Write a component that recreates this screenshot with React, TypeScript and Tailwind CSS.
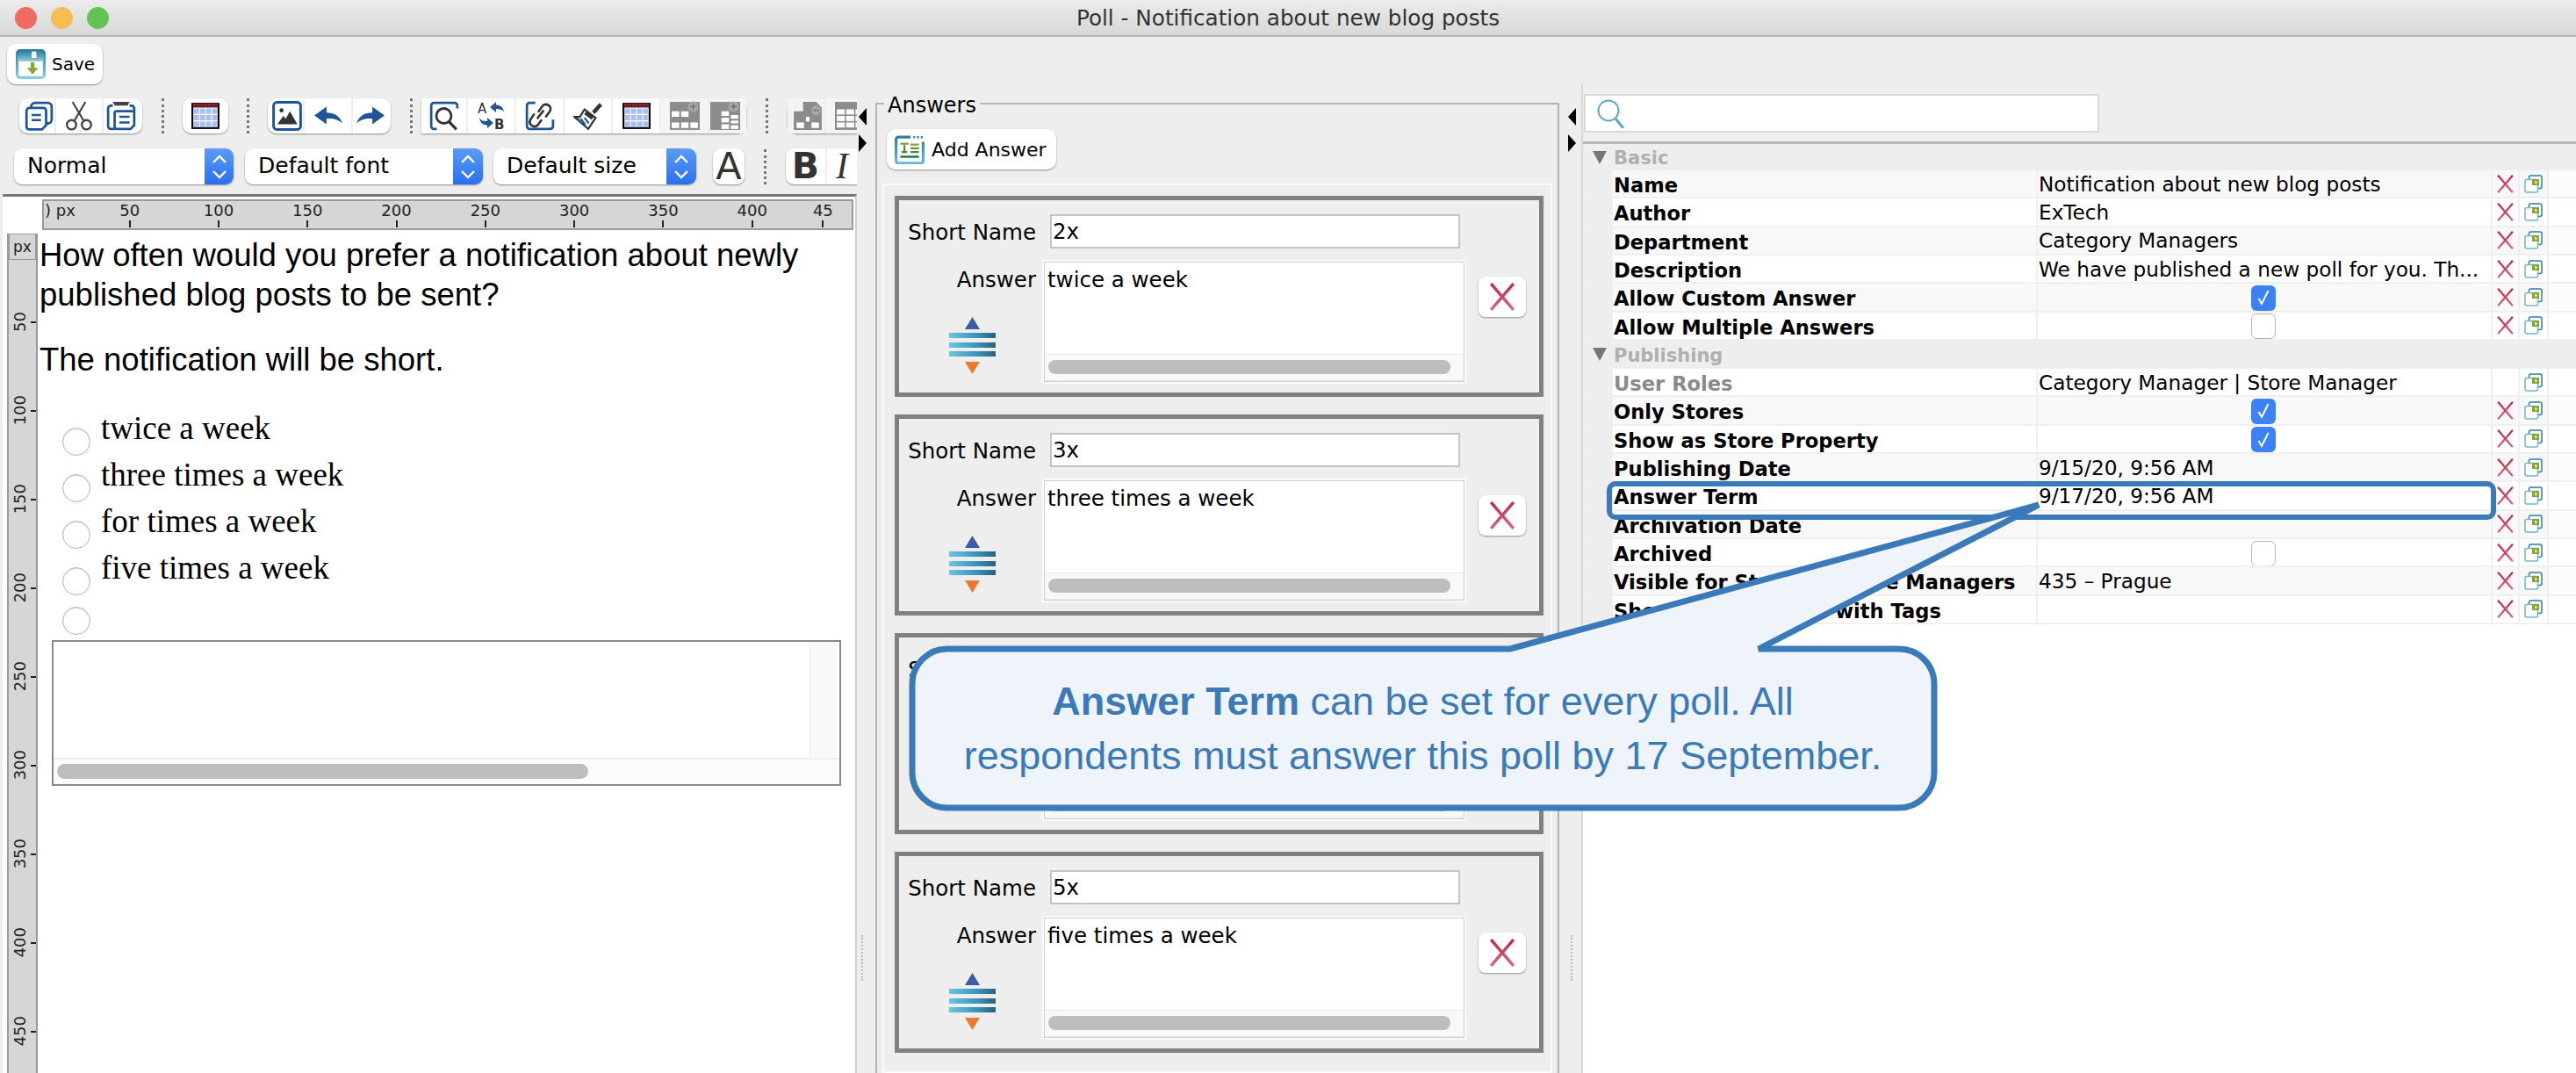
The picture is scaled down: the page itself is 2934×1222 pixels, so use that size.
import type { ReactNode } from "react";

const BLUE = "#1f5596";
const CALLOUT = "#3a7ab8";

type Row = { name: string; value?: string; check?: boolean; muted?: boolean; noDelete?: boolean };

const BASIC: Row[] = [
  { name: "Name", value: "Notification about new blog posts" },
  { name: "Author", value: "ExTech" },
  { name: "Department", value: "Category Managers" },
  { name: "Description", value: "We have published a new poll for you. Th..." },
  { name: "Allow Custom Answer", check: true },
  { name: "Allow Multiple Answers", check: false },
];

const PUBLISHING: Row[] = [
  { name: "User Roles", value: "Category Manager | Store Manager", muted: true, noDelete: true },
  { name: "Only Stores", check: true },
  { name: "Show as Store Property", check: true },
  { name: "Publishing Date", value: "9/15/20, 9:56 AM" },
  { name: "Answer Term", value: "9/17/20, 9:56 AM" },
  { name: "Archivation Date" },
  { name: "Archived", check: false },
  { name: "Visible for Stores & Store Managers", value: "435 – Prague" },
  { name: "Show for All Stores with Tags" },
];

const CARDS = [
  { short: "2x", answer: "twice a week" },
  { short: "3x", answer: "three times a week" },
  { short: "4x", answer: "for times a week" },
  { short: "5x", answer: "five times a week" },
];

const RADIOS = ["twice a week", "three times a week", "for times a week", "five times a week"];

/* ---------- icons ---------- */

function Icon({ children, size = 34 }: { children: ReactNode; size?: number }) {
  return (
    <svg width={size} height={size} viewBox="0 0 32 32" fill="none">
      {children}
    </svg>
  );
}

function SaveIcon() {
  return (
    <svg width="34" height="34" viewBox="0 0 32 32" fill="none">
      <defs>
        <linearGradient id="saveFrame" x1="0" y1="0" x2="0" y2="1">
          <stop offset="0" stopColor="#2f7ea0" />
          <stop offset="1" stopColor="#8ccbdc" />
        </linearGradient>
      </defs>
      <rect x="1.5" y="1.5" width="29" height="29" rx="3" fill="#fff" stroke="url(#saveFrame)" strokeWidth="3" />
      <rect x="2" y="2" width="28" height="11" fill="url(#saveFrame)" />
      <rect x="17" y="2.5" width="5" height="7" fill="#fff" />
      <path d="M18 15v6h4l-6 7-6-7h4v-6z" transform="translate(2 -1)" fill="#8aa42f" />
    </svg>
  );
}

function CopyIcon() {
  return (
    <Icon>
      <rect x="8" y="2" width="22" height="22" rx="4" stroke={BLUE} strokeWidth="2.6" />
      <path d="M6 7.5h15a3 3 0 0 1 3 3V26l-4.5 4.5H6a3 3 0 0 1-3-3v-17a3 3 0 0 1 3-3z" fill="#fff" stroke={BLUE} strokeWidth="2.6" />
      <path d="M8.5 15h10M8.5 20.5h10" stroke={BLUE} strokeWidth="2.4" />
    </Icon>
  );
}

function CutIcon() {
  return (
    <Icon>
      <path d="M9 1l12.5 21M23 1L10.5 22" stroke="#444" strokeWidth="2" />
      <circle cx="8" cy="25.5" r="5" stroke="#444" strokeWidth="2.2" />
      <circle cx="24" cy="25.5" r="5" stroke="#444" strokeWidth="2.2" />
    </Icon>
  );
}

function PasteIcon() {
  return (
    <Icon>
      <path d="M7 5H5a3 3 0 0 0-3 3v19a3 3 0 0 0 3 3h4M25 5h2a3 3 0 0 1 3 3v2" stroke={BLUE} strokeWidth="2.6" />
      <path d="M7 1h18l-2 4H9z" fill="#444" />
      <path d="M11 11h19v15l-4 4H11a2 2 0 0 1-2-2V13a2 2 0 0 1 2-2z" fill="#fff" stroke={BLUE} strokeWidth="2.6" />
      <path d="M14 17h11M14 23h11" stroke={BLUE} strokeWidth="2.4" />
    </Icon>
  );
}

function TableIcon() {
  return (
    <Icon>
      <rect x="1" y="2" width="30" height="28" fill="#000" />
      <rect x="2.5" y="3" width="27" height="4" fill="#6a1a2a" />
      <path d="M3 4h26" stroke="#d23" strokeWidth="1.4" strokeDasharray="2 2" />
      <rect x="3" y="7" width="26" height="21" fill="#fff" />
      {[8, 15, 22].map((y) =>
        [3.5, 10, 16.5, 23].map((x) => <rect key={`${x}-${y}`} x={x} y={y} width="5.6" height="5.8" fill="#a9bff0" />),
      )}
    </Icon>
  );
}

function ImageIcon() {
  return (
    <Icon>
      <rect x="1.5" y="1.5" width="29" height="29" rx="3.5" fill="#fff" stroke={BLUE} strokeWidth="2.8" />
      <circle cx="10" cy="10" r="2.2" fill="#333" />
      <path d="M5.5 25l6.5-9 2.5 3 4.5-8 8 14z" fill="#333" />
    </Icon>
  );
}

function UndoIcon({ flip }: { flip?: boolean }) {
  return (
    <Icon>
      <g transform={flip ? "matrix(-1 0 0 1 32 0)" : undefined}>
        <path d="M1 15.5L14 6v6.5c8 0 14 3 17 11.5-5-4.500-10-5.500-17-5v6z" fill={BLUE} />
      </g>
    </Icon>
  );
}

function FindIcon() {
  return (
    <Icon>
      <path d="M8 30H5a3 3 0 0 1-3-3V5a3 3 0 0 1 3-3h22a3 3 0 0 1 3 3v3" stroke={BLUE} strokeWidth="2.6" />
      <circle cx="15.5" cy="16" r="8" fill="#fff" stroke="#333" strokeWidth="2.6" />
      <path d="M21 22l8 8.500" stroke="#333" strokeWidth="3" />
    </Icon>
  );
}

function ReplaceIcon() {
  return (
    <svg width="34" height="34" viewBox="0 0 34 34" fill="none">
      <text x="1" y="14" fontSize="15" fontFamily="DejaVu Sans" fill="#333">A</text>
      <text x="20" y="32" fontSize="15" fontFamily="DejaVu Sans" fontWeight="bold" fill="#333">B</text>
      <path d="M15 7l7-6v3.500c4 0 8 2 9 8-2-3-5-3.500-9-3.500V13z" fill={BLUE} />
      <path d="M19 25l-7 6v-3.500c-4 0-8-2-9-8 2 3 5 3.500 9 3.500V19z" fill={BLUE} />
    </svg>
  );
}

function LinkIcon() {
  return (
    <Icon>
      <path d="M11 2H5a3 3 0 0 0-3 3v22a3 3 0 0 0 3 3h22a3 3 0 0 0 3-3v-7" stroke={BLUE} strokeWidth="2.6" />
      <path d="M14 12l5-7a5 5 0 0 1 8 5.500l-5 7M18 20l-4.500 6a5 5 0 0 1-8-5.500l4.500-7" stroke="#333" strokeWidth="2.4" />
      <path d="M13 19l7-9" stroke="#333" strokeWidth="2.4" />
    </Icon>
  );
}

function BroomIcon() {
  return (
    <Icon>
      <path d="M20 11l8-9 3 3-8 9z" fill="#333" />
      <path d="M12 9l12 9-8 12L1 17l6 0z" fill="#fff" stroke="#333" strokeWidth="2" />
      <path d="M14 11l8 6-2.500 3-8-6z" fill="#333" />
      <path d="M8 19l5 7M12 18l4.500 6M4.500 18.500L9 24" stroke={BLUE} strokeWidth="2" />
    </Icon>
  );
}

function GreyTable({ variant }: { variant: number }) {
  const fill = "#8c8c8c";
  return (
    <Icon>
      <rect x="0" y="1" width="32" height="30" fill={fill} />
      {variant === 0 && (
        <>
          <rect x="2" y="11" width="8" height="6" fill="#fff" />
          <rect x="12" y="11" width="8" height="6" fill="#fff" />
          <rect x="2" y="23" width="8" height="6" fill="#fff" />
          <rect x="12" y="23" width="8" height="6" fill="#fff" />
          <rect x="22" y="23" width="8" height="6" fill="#fff" />
        </>
      )}
      {variant === 1 && (
        <>
          <rect x="12" y="11" width="8" height="5" fill="#fff" />
          <rect x="22" y="15" width="8" height="4" fill="#fff" />
          <rect x="12" y="18" width="8" height="5" fill="#fff" />
          <rect x="22" y="21" width="8" height="3" fill="#fff" />
          <rect x="12" y="25" width="8" height="5" fill="#fff" />
          <rect x="22" y="26" width="8" height="4" fill="#fff" />
        </>
      )}
      <circle cx="25" cy="6" r="5.500" fill="#aaa" />
      <path d="M21.500 6h7M25 2.500v7" stroke="#777" strokeWidth="1.600" />
    </Icon>
  );
}

function MergeIcon() {
  return (
    <Icon>
      <path d="M11 1h14l6 6v24H1V11h10z" fill="#8c8c8c" />
      <rect x="4" y="23" width="8" height="6" fill="#fff" />
      <rect x="20" y="23" width="8" height="6" fill="#fff" />
      <rect x="14" y="17" width="4" height="5" fill="#fff" />
      <circle cx="25" cy="10" r="5" fill="#aaa" />
      <path d="M22 10h6" stroke="#777" strokeWidth="1.600" />
    </Icon>
  );
}

function GridIcon() {
  return (
    <Icon>
      <rect x="0" y="1" width="32" height="30" fill="#8c8c8c" />
      {[9, 16, 23].map((y) =>
        [2, 12, 22].map((x) => <rect key={`${x}-${y}`} x={x} y={y} width="8.500" height="5.500" fill="#fff" />),
      )}
    </Icon>
  );
}

function AddAnswerIcon() {
  return (
    <svg width="34" height="34" viewBox="0 0 32 32" fill="none">
      <defs>
        <linearGradient id="addFrame" x1="0" y1="0" x2="0" y2="1">
          <stop offset="0" stopColor="#2f7ea0" />
          <stop offset="1" stopColor="#66b7dc" />
        </linearGradient>
        <linearGradient id="addLines" x1="0" y1="0" x2="0" y2="1">
          <stop offset="0" stopColor="#8aa42f" />
          <stop offset="1" stopColor="#1f7a45" />
        </linearGradient>
      </defs>
      <path d="M17 3H4a2.500 2.500 0 0 0-2.500 2.500v23A2.500 2.500 0 0 0 4 31h24a2.500 2.500 0 0 0 2.500-2.500V8" stroke="url(#addFrame)" strokeWidth="3" />
      <path d="M20 3h2M24 3h2M28 3h2" stroke="#2f7ea0" strokeWidth="2.400" />
      <path d="M6 10h9M10.500 10v9M7.500 19h6M17 11h9M17 15h9M17 19h9M6 24h20" stroke="url(#addLines)" strokeWidth="2.200" />
    </svg>
  );
}

function XIcon({ size = 32, id }: { size?: number; id: string }) {
  return (
    <svg width={size} height={size} viewBox="0 0 30 30" fill="none">
      <defs>
        <linearGradient id={id} x1="0" y1="0" x2="0" y2="1">
          <stop offset="0" stopColor="#c2293f" />
          <stop offset="1" stopColor="#d4688a" />
        </linearGradient>
      </defs>
      <path d="M3 1l24 28M27 1L3 29" stroke={`url(#${id})`} strokeWidth="3.200" />
    </svg>
  );
}

function MoveIcon() {
  return (
    <svg width="53" height="65" viewBox="0 0 53 65">
      <defs>
        <linearGradient id="moveBar" x1="0" y1="0" x2="1" y2="0">
          <stop offset="0" stopColor="#6cc4e2" />
          <stop offset="0.6" stopColor="#3a93b8" />
          <stop offset="1" stopColor="#2e5f78" />
        </linearGradient>
      </defs>
      <path d="M26.500 0L35 14H18z" fill="#3a5ba8" />
      <rect y="18" width="53" height="6" fill="url(#moveBar)" />
      <rect y="29" width="53" height="6" fill="url(#moveBar)" />
      <rect y="39" width="53" height="6" fill="url(#moveBar)" />
      <path d="M26.500 65L18 51h17z" fill="#ec7a2c" />
    </svg>
  );
}

function SmallCopy() {
  return (
    <svg width="21" height="21" viewBox="0 0 21 21" fill="none">
      <rect x="5.500" y="1" width="14.500" height="14.500" rx="2" fill="#fff" stroke="#2f7ea0" strokeWidth="1.500" />
      <rect x="1" y="5.500" width="14.500" height="14.500" rx="2" fill="#fff" stroke="#6fb6cf" strokeWidth="1.500" />
      <path d="M9 5h8v7H9z" fill="#8aa42f" />
      <path d="M12 7l3 1-2 3z" fill="#fff" />
    </svg>
  );
}

function Chevrons() {
  return (
    <svg width="20" height="32" viewBox="0 0 20 32" fill="none">
      <path d="M3 11l7-7 7 7M3 21l7 7 7-7" stroke="#fff" strokeWidth="2.400" />
    </svg>
  );
}

/* ---------- toolbar ---------- */

function Seg({ w, children }: { w: string; children: ReactNode }) {
  return <div className={`flex h-full shrink-0 items-center justify-center border-r-2 border-[#eeeeee] last:border-r-0 ${w}`}>{children}</div>;
}

function Group({ children, className = "rounded-[10px]" }: { children: ReactNode; className?: string }) {
  return <div className={`flex h-[40px] shrink-0 bg-white shadow-[0_1px_2px_rgba(0,0,0,0.4)] ${className}`}>{children}</div>;
}

function Sep({ className }: { className: string }) {
  return <div className={`h-[40px] w-0 shrink-0 border-l-[3px] border-dotted border-[#777] ${className}`} />;
}

function Combo({ label, w, blue }: { label: string; w: string; blue: string }) {
  return (
    <div className={`flex h-[41px] shrink-0 overflow-hidden rounded-[9px] bg-white shadow-[0_1px_2px_rgba(0,0,0,0.4)] ${w}`}>
      <div className="flex-1 pl-[15px] text-[25px] leading-[40px] text-black">{label}</div>
      <div className={`flex items-center justify-center bg-gradient-to-b from-[#5b9bf6] to-[#2a6ef2] ${blue}`}>
        <Chevrons />
      </div>
    </div>
  );
}

/* ---------- rulers ---------- */

function HorizontalRuler() {
  const marks = [50, 100, 150, 200, 250, 300, 350, 400];
  return (
    <div className="flex h-[35px] w-[924px] shrink-0 overflow-hidden border-2 border-[#9a9a9a] bg-[#d6d6d6] text-[18px] leading-[22px] text-[#222]">
      <div className="w-[47px] shrink-0 overflow-hidden whitespace-nowrap pl-[1px]">) px</div>
      {marks.map((m) => (
        <div key={m} className="flex w-[101.3px] shrink-0 flex-col items-center">
          <span>{m}</span>
          <span className="h-[8px] w-[2px] bg-[#222]" />
        </div>
      ))}
      <div className="flex w-[60px] shrink-0 flex-col items-center">
        <span>45</span>
        <span className="h-[8px] w-[2px] bg-[#222]" />
      </div>
    </div>
  );
}

function VerticalRuler() {
  const marks = [50, 100, 150, 200, 250, 300, 350, 400, 450];
  return (
    <div className="flex w-[35px] shrink-0 flex-col border-x-2 border-[#9a9a9a] bg-[#d6d6d6] text-[18px] leading-[20px] text-[#222]">
      <div className="h-[50px] shrink-0">
        <div className="border border-[#999] text-center text-[17px] leading-[28px]">px</div>
      </div>
      {marks.map((m) => (
        <div key={m} className="flex h-[101px] shrink-0 items-center justify-end gap-[2px]">
          <span className="rotate-180 [writing-mode:vertical-rl]">{m}</span>
          <span className="h-[2px] w-[6px] bg-[#222]" />
        </div>
      ))}
    </div>
  );
}

/* ---------- panels ---------- */

function EditorPanel() {
  return (
    <div className="flex w-[976px] shrink-0 flex-col overflow-hidden">
      <div className="flex pl-[22px] pt-[16px]">
        <Group>
          <Seg w="w-[42px] pl-[4px]"><CopyIcon /></Seg>
          <Seg w="w-[54px]"><CutIcon /></Seg>
          <Seg w="w-[44px] pr-[4px]"><PasteIcon /></Seg>
        </Group>
        <Sep className="ml-[22px]" />
        <div className="ml-[21px]">
          <Group>
            <Seg w="w-[52px]"><TableIcon /></Seg>
          </Group>
        </div>
        <Sep className="ml-[21px]" />
        <div className="ml-[21px]">
          <Group>
            <Seg w="w-[42px] pl-[4px]"><ImageIcon /></Seg>
            <Seg w="w-[55px]"><UndoIcon /></Seg>
            <Seg w="w-[43px] pr-[4px]"><UndoIcon flip /></Seg>
          </Group>
        </div>
        <Sep className="ml-[22px]" />
        <div className="ml-[10px]">
          <Group className="rounded-r-[10px]">
            <Seg w="w-[53px]"><FindIcon /></Seg>
            <Seg w="w-[55px]"><ReplaceIcon /></Seg>
            <Seg w="w-[55px]"><LinkIcon /></Seg>
            <Seg w="w-[55px]"><BroomIcon /></Seg>
            <Seg w="w-[55px]"><TableIcon /></Seg>
            <Seg w="w-[55px] bg-[#f4f4f4]"><GreyTable variant={0} /></Seg>
            <Seg w="w-[42px] pr-[6px] bg-[#f4f4f4]"><GreyTable variant={1} /></Seg>
          </Group>
        </div>
        <Sep className="ml-[22px]" />
        <div className="ml-[22px]">
          <Group className="rounded-l-[10px]">
            <Seg w="w-[43px] pl-[4px] bg-[#f4f4f4]"><MergeIcon /></Seg>
            <Seg w="w-[55px] bg-[#f4f4f4]"><GridIcon /></Seg>
          </Group>
        </div>
      </div>

      <div className="mt-[17px] flex items-center pl-[16px]">
        <Combo label="Normal" w="w-[250px]" blue="w-[33px]" />
        <div className="ml-[13px]"><Combo label="Default font" w="w-[271px]" blue="w-[34px]" /></div>
        <div className="ml-[12px]"><Combo label="Default size" w="w-[231px]" blue="w-[34px]" /></div>
        <div className="ml-[19px] flex h-[41px] w-[36px] shrink-0 items-center justify-center rounded-[9px] bg-white text-[43px] leading-none text-[#333] shadow-[0_1px_2px_rgba(0,0,0,0.4)]">A</div>
        <Sep className="ml-[22px]" />
        <div className="ml-[22px] flex h-[41px] shrink-0 rounded-l-[9px] bg-white shadow-[0_1px_2px_rgba(0,0,0,0.4)]">
          <div className="flex w-[47px] items-center justify-center border-r-2 border-[#eeeeee] text-[41px] font-bold leading-none text-[#333]">B</div>
          <div className="w-[34px] pl-[10px] font-['Liberation_Serif',serif] text-[42px] italic leading-[41px] text-[#333]">I</div>
        </div>
      </div>

      <div className="ml-[3px] mt-[11px] flex min-h-0 flex-1 flex-col border-r-2 border-t-[3px] border-r-[#d0d0d0] border-t-[#777] bg-white">
        <div className="flex pl-[45px] pt-[3px]">
          <HorizontalRuler />
        </div>
        <div className="mt-[4px] flex min-h-0 flex-1 pl-[5px]">
          <VerticalRuler />
          <div className="min-w-0 flex-1 pl-[2px] pt-[2px] font-['Liberation_Sans',sans-serif] text-black">
            <p className="text-[36.5px] leading-[45px]">
              How often would you prefer a notification about newly
              <br />
              published blog posts to be sent?
            </p>
            <p className="mt-[29px] text-[36.5px] leading-[45px]">The notification will be short.</p>
            <div className="mt-[37px] flex flex-col pl-[26px]">
              {RADIOS.map((r) => (
                <div key={r} className="flex h-[53px] gap-[12px]">
                  <span className="mt-[18px] h-[32px] w-[32px] shrink-0 rounded-full border border-[#b5b5b5] bg-white shadow-[inset_0_1px_1px_rgba(0,0,0,0.15)]" />
                  <span className="font-['Liberation_Serif',serif] text-[37px] leading-[38px]">{r}</span>
                </div>
              ))}
              <span className="mt-[10px] h-[32px] w-[32px] rounded-full border border-[#b5b5b5] bg-white shadow-[inset_0_1px_1px_rgba(0,0,0,0.15)]" />
            </div>
            <div className="ml-[14px] mt-[6px] flex h-[166px] w-[899px] flex-col border-2 border-[#8a8a8a] bg-white">
              <div className="flex min-h-0 flex-1 justify-end pr-[2px]">
                <div className="w-[32px] border-l border-[#eeeeee] bg-[#f9f9f9]" />
              </div>
              <div className="h-[30px] border-t-2 border-[#eeeeee] bg-[#fbfbfb] pl-[4px] pt-[5px]">
                <div className="h-[17px] w-[605px] rounded-full bg-[#bdbdbd]" />
              </div>
            </div>
          </div>
        </div>
      </div>
    </div>
  );
}

function Splitter({ arrowsClass }: { arrowsClass: string }) {
  return (
    <div className={`flex shrink-0 flex-col ${arrowsClass}`}>
      <div className="mt-[27px] h-0 w-0 border-y-[10px] border-r-[9px] border-y-transparent border-r-black" />
      <div className="mt-[10px] h-0 w-0 border-y-[10px] border-l-[9px] border-y-transparent border-l-black" />
      <div className="ml-[3px] mt-[892px] h-[52px] w-0 border-l-2 border-dotted border-[#bbb]" />
    </div>
  );
}

function AnswerCard({ short, answer, index }: { short: string; answer: string; index: number }) {
  return (
    <div className="h-[229px] w-[739px] shrink-0 border-[5px] border-[#808080] bg-[#eeeeee] pt-[16px]">
      <div className="flex h-[39px] items-center">
        <div className="w-[156px] pt-[3px] text-right text-[24.5px] leading-none text-black">Short Name</div>
        <div className="ml-[16px] h-[39px] w-[467px] border-2 border-[#c4c4c4] bg-white pl-[1px] text-[24.5px] leading-[36px] text-black">{short}</div>
      </div>
      <div className="mt-[15px] flex">
        <div className="flex w-[165px] shrink-0 flex-col">
          <div className="pr-[9px] pt-[6px] text-right text-[24.5px] leading-[30px] text-black">Answer</div>
          <div className="ml-[57px] mt-[27px]"><MoveIcon /></div>
        </div>
        <div className="flex h-[137px] w-[479px] shrink-0 flex-col border border-[#cfcfcf] bg-white shadow-[0_0_0_2px_#fafafa]">
          <div className="min-h-0 flex-1 pl-[3px] pt-[5px] text-[24.5px] leading-[30px] text-black">{answer}</div>
          <div className="h-[31px] border-y border-[#e8e8e8] bg-[#f8f8f8] pl-[4px] pt-[6px]">
            <div className="h-[16px] w-[458px] rounded-full bg-[#bdbdbd]" />
          </div>
        </div>
        <div className="ml-[16px] mt-[17px] flex h-[46px] w-[54px] shrink-0 items-center justify-center rounded-[8px] bg-white shadow-[0_1px_2px_rgba(0,0,0,0.4)]">
          <XIcon id={`cardX${index}`} />
        </div>
      </div>
    </div>
  );
}

function AnswersPanel() {
  return (
    <div className="flex w-[779px] shrink-0 flex-col pt-[21px]">
      <div className="relative flex h-[1105px] flex-col border-x-2 border-t-2 border-[#b4b4b4] px-[6px] pt-[28px]">
        <div className="absolute -top-[13px] left-[8px] bg-[#eeeeee] px-[4px] text-[24px] leading-[28px] text-black">Answers</div>
        <div className="ml-[5px] flex h-[46px] w-[193px] items-center gap-[8px] rounded-[10px] bg-white pl-[9px] text-[22px] text-black shadow-[0_1px_2px_rgba(0,0,0,0.4)]">
          <AddAnswerIcon />
          Add Answer
        </div>
        <div className="mt-[16px] flex min-h-0 w-[763px] flex-1 flex-col gap-[20px] overflow-hidden border-x-2 border-y-2 border-[#fafafa] bg-[#eeeeee] pl-[12px] pt-[12px]">
          {CARDS.map((c, i) => (
            <AnswerCard key={c.short} short={c.short} answer={c.answer} index={i} />
          ))}
        </div>
      </div>
    </div>
  );
}

function Check({ on }: { on: boolean }) {
  if (on) {
    return (
      <span className="mt-[2px] flex h-[29px] w-[28px] items-center justify-center rounded-[6px] bg-[#3a82f6]">
        <svg width="16" height="20" viewBox="0 0 16 20" fill="none">
          <path d="M2.500 11l3.500 6L13.500 2" stroke="#fff" strokeWidth="2" />
        </svg>
      </span>
    );
  }
  return <span className="mt-[2px] h-[29px] w-[28px] rounded-[6px] border border-[#b5b5b5] bg-white" />;
}

function PropRow({ row, shaded, id }: { row: Row; shaded: boolean; id: string }) {
  return (
    <div className="flex h-[32.33px] border-b-2 border-[#efefef]">
      <div className="w-[34px] shrink-0 bg-[#eeeeee]" />
      <div className={`w-[484px] shrink-0 overflow-hidden whitespace-nowrap border-r-2 border-[#f0f0f0] pl-[1px] text-[22.6px] font-bold leading-[35px] ${shaded ? "bg-[#f8f8f8]" : "bg-white"} ${row.muted ? "text-[#8a8a8a]" : "text-black"}`}>
        {row.name}
      </div>
      <div className={`flex w-[518px] shrink-0 items-center overflow-hidden whitespace-nowrap border-r-2 border-[#f0f0f0] pl-[1px] text-[23.2px] leading-[35px] text-black ${shaded ? "bg-[#f8f8f8]" : "bg-white"} ${row.check !== undefined ? "justify-center pr-[3px]" : ""}`}>
        {row.check !== undefined ? <Check on={row.check} /> : row.value}
      </div>
      <div className={`flex w-[31px] shrink-0 items-center justify-center border-r-2 border-[#f0f0f0] ${shaded ? "bg-[#f8f8f8]" : "bg-white"}`}>
        {!row.noDelete && <XIcon size={21} id={id} />}
      </div>
      <div className={`flex w-[33px] shrink-0 items-center justify-center border-r-2 border-[#f0f0f0] ${shaded ? "bg-[#f8f8f8]" : "bg-white"}`}>
        <SmallCopy />
      </div>
      <div className={`min-w-0 flex-1 ${shaded ? "bg-[#fcfcfc]" : "bg-white"}`} />
    </div>
  );
}

function GroupHeader({ label, h }: { label: string; h: string }) {
  return (
    <div className={`flex items-center bg-[#eeeeee] pl-[11px] pt-[3px] ${h}`}>
      <div className="-mt-[3px] h-0 w-0 border-x-[8px] border-t-[15px] border-x-transparent border-t-[#777]" />
      <span className="ml-[8px] text-[21px] font-bold leading-none text-[#b0b0b0]">{label}</span>
    </div>
  );
}

function PropertiesPanel() {
  return (
    <div className="flex min-w-0 flex-1 flex-col border-l-2 border-[#d8d8d8] bg-white">
      <div className="h-[65px] shrink-0 bg-[#eeeeee] pl-[1px] pt-[11px]">
        <div className="flex h-[44px] w-[587px] items-center border-2 border-[#d8d8d8] bg-white pl-[12px]">
          <svg width="34" height="34" viewBox="0 0 34 34" fill="none">
            <circle cx="14" cy="14" r="11.500" stroke="#5ea8c4" strokeWidth="2" />
            <path d="M22 23l9 11" stroke="#5ea8c4" strokeWidth="3" />
          </svg>
        </div>
      </div>
      <div className="border-t-[3px] border-[#b8b8b8]">
        <GroupHeader label="Basic" h="h-[30px]" />
        {BASIC.map((r, i) => (
          <PropRow key={r.name} row={r} shaded={i % 2 === 0} id={`basicX${i}`} />
        ))}
        <GroupHeader label="Publishing" h="h-[32px]" />
        {PUBLISHING.map((r, i) => (
          <PropRow key={r.name} row={r} shaded={i % 2 === 1} id={`pubX${i}`} />
        ))}
      </div>
    </div>
  );
}

function Callout() {
  return (
    <>
      <div className="absolute left-[1830px] top-[548px] h-[44px] w-[1013px] rounded-[10px] border-[6px] border-[#3a7ab8]" />
      <svg className="absolute left-0 top-0" width="2934" height="1222" viewBox="0 0 2934 1222" fill="none">
        <path
          d="M1080 739H1720L2322 575L2003 739H2163A40 40 0 0 1 2203 779V880A40 40 0 0 1 2163 920H1080A40 40 0 0 1 1039 880V779A40 40 0 0 1 1080 739Z"
          fill="#eef4fa"
          stroke={CALLOUT}
          strokeWidth="7"
        />
      </svg>
      <div className="absolute left-[1035px] top-[736px] flex h-[187px] w-[1171px] items-center justify-center text-center font-['Liberation_Sans',sans-serif] text-[45px] leading-[62px] text-[#3a7ab8]">
        <p>
          <b>Answer Term</b> can be set for every poll. All
          <br />
          respondents must answer this poll by 17 September.
        </p>
      </div>
    </>
  );
}

export default function App() {
  return (
    <div className="relative h-[1222px] w-[2934px] overflow-hidden bg-[#eeeeee] font-['DejaVu_Sans',sans-serif]">
      <div className="grid h-[42px] grid-cols-[1fr_auto_1fr] items-center border-b-2 border-[#b5b5b5] bg-gradient-to-b from-[#ececec] to-[#d8d8d8]">
        <div className="flex gap-[16px] pl-[17px]">
          <span className="h-[25px] w-[25px] rounded-full bg-[#ef6a5f]" />
          <span className="h-[25px] w-[25px] rounded-full bg-[#f6bd4f]" />
          <span className="h-[25px] w-[25px] rounded-full bg-[#61c454]" />
        </div>
        <div className="pt-[3px] text-[24.7px] leading-none text-[#333]">Poll - Notification about new blog posts</div>
        <div />
      </div>

      <div className="h-[54px] pl-[8px] pt-[8px]">
        <div className="flex h-[46px] w-[109px] items-center gap-[7px] rounded-[10px] bg-white pl-[10px] text-[20px] text-black shadow-[0_1px_2px_rgba(0,0,0,0.4)]">
          <SaveIcon />
          Save
        </div>
      </div>

      <div className="flex h-[1126px]">
        <EditorPanel />
        <Splitter arrowsClass="w-[21px] pl-[2px]" />
        <AnswersPanel />
        <Splitter arrowsClass="w-[25px] pl-[10px]" />
        <PropertiesPanel />
      </div>

      <Callout />
    </div>
  );
}
